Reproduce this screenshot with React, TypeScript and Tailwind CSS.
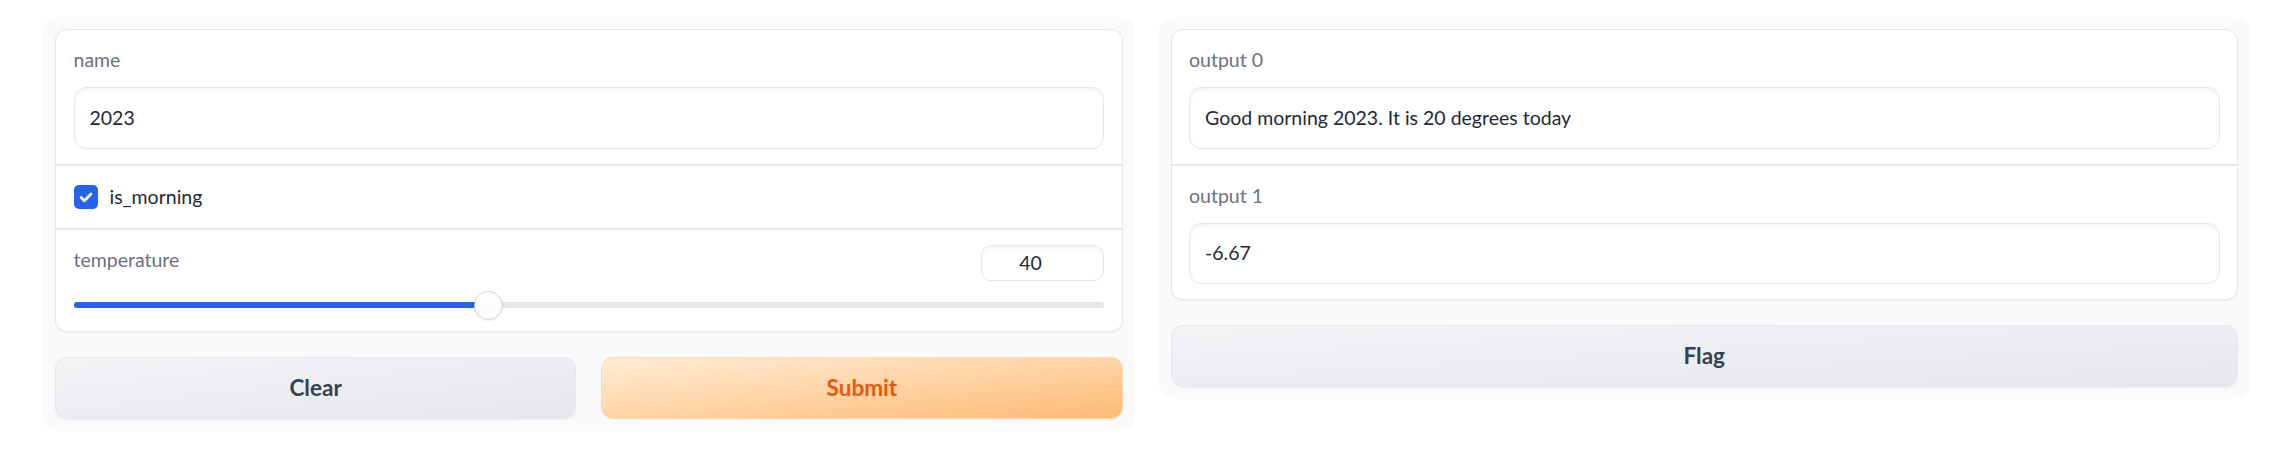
import React from "react";

const FONT = { fontFamily: '"Lato", "Noto Sans", sans-serif' };

function Label({ children }: { children: React.ReactNode }) {
  return <div className="text-[19.5px] leading-[30px] text-[#6b7280] mb-[12px]">{children}</div>;
}

function TextBox({ value, h = "h-[62px]" }: { value: string; h?: string }) {
  return (
    <div
      className={`${h} flex items-center px-[15px] rounded-[12px] border border-[#e5e7eb] bg-white shadow-[inset_0_2px_4px_0_rgba(0,0,0,0.05)] text-[19.5px] text-[#1f2937]`}
    >
      {value}
    </div>
  );
}

function Slider({ value, max }: { value: number; max: number }) {
  const f = value / max;
  return (
    <div className="relative h-[29px] mt-[10px]">
      <div className="absolute left-0 right-0 top-[11.5px] h-[6px] rounded-full bg-[#e5e7eb]" />
      <div
        className="absolute left-0 top-[11.5px] h-[6px] rounded-l-full bg-[#2563eb]"
        style={{ width: `calc((100% - 29px) * ${f} + 14.5px)` }}
      />
      <div
        className="absolute top-0 w-[29px] h-[29px] rounded-full border border-[#d1d5db] bg-gradient-to-b from-white to-[#f9fafb] shadow-[0_1px_2px_rgba(0,0,0,0.08)]"
        style={{ left: `calc((100% - 29px) * ${f})` }}
      />
    </div>
  );
}

function Divider() {
  return <div className="h-[2px] bg-[#e5e7eb]" />;
}

const btn =
  "h-[62px] rounded-[12px] border text-[22.5px] font-bold shadow-[0_1px_2px_rgba(0,0,0,0.05)] bg-gradient-to-br";

export default function App() {
  return (
    <div className="min-h-screen bg-white" style={FONT}>
      <div className="flex items-start gap-6 px-[43px] pt-[17px]">
        {/* Left column */}
        <div className="flex-1 flex flex-col gap-[25px] p-3 rounded-[14px] bg-[#f9fafb]">
          <div className="flex flex-col rounded-[12px] border border-[#e5e7eb] bg-white overflow-hidden shadow-[0_1px_2px_rgba(0,0,0,0.05)]">
            <div className="px-[17.5px] pt-[14.5px] pb-[15.5px]">
              <Label>name</Label>
              <TextBox value="2023" />
            </div>
            <Divider />
            <div className="px-[17.5px] py-[15.5px]">
              <div className="h-[31px] flex items-center gap-[12px]">
                <div className="w-[24px] h-[24px] rounded-[5px] bg-[#2563eb] flex items-center justify-center">
                  <svg width="18" height="18" viewBox="0 0 16 16" fill="none">
                    <path d="M3.6 8.4l2.9 2.9L12.4 5.3" stroke="white" strokeWidth="2.4" strokeLinecap="round" strokeLinejoin="round" />
                  </svg>
                </div>
                <span className="text-[19.5px] text-[#1f2937]">is_morning</span>
              </div>
            </div>
            <Divider />
            <div className="px-[17.5px] pt-[14.5px] pb-[11.5px]">
              <div className="flex items-start justify-between">
                <div className="text-[19.5px] leading-[30px] text-[#6b7280]">temperature</div>
                <div className="w-[123px] h-[36px] rounded-[10px] border border-[#e5e7eb] bg-white shadow-[inset_0_2px_4px_0_rgba(0,0,0,0.05)] flex items-center justify-center pr-[24px] text-[19.5px] text-[#1f2937]">
                  40
                </div>
              </div>
              <Slider value={40} max={100} />
            </div>
          </div>
          <div className="flex gap-[25px]">
            <button className={`${btn} flex-1 border-[#e5e7eb] from-[#f3f4f6] to-[#e5e7eb] text-[#374151]`}>
              Clear
            </button>
            <button className={`${btn} flex-1 border-[#fed7aa] from-[#ffedd5] to-[#fdba74] text-[#ea580c]`}>
              Submit
            </button>
          </div>
        </div>

        {/* Right column */}
        <div className="flex-1 flex flex-col gap-[25px] p-3 rounded-[14px] bg-[#f9fafb]">
          <div className="flex flex-col rounded-[12px] border border-[#e5e7eb] bg-white overflow-hidden shadow-[0_1px_2px_rgba(0,0,0,0.05)]">
            <div className="px-[17.5px] pt-[14.5px] pb-[15.5px]">
              <Label>output 0</Label>
              <TextBox value="Good morning 2023. It is 20 degrees today" />
            </div>
            <Divider />
            <div className="px-[17.5px] pt-[14.5px] pb-[15.5px]">
              <Label>output 1</Label>
              <TextBox value="-6.67" h="h-[61px]" />
            </div>
          </div>
          <button className={`${btn} w-full border-[#e5e7eb] from-[#f3f4f6] to-[#e5e7eb] text-[#374151]`}>
            Flag
          </button>
        </div>
      </div>
    </div>
  );
}
